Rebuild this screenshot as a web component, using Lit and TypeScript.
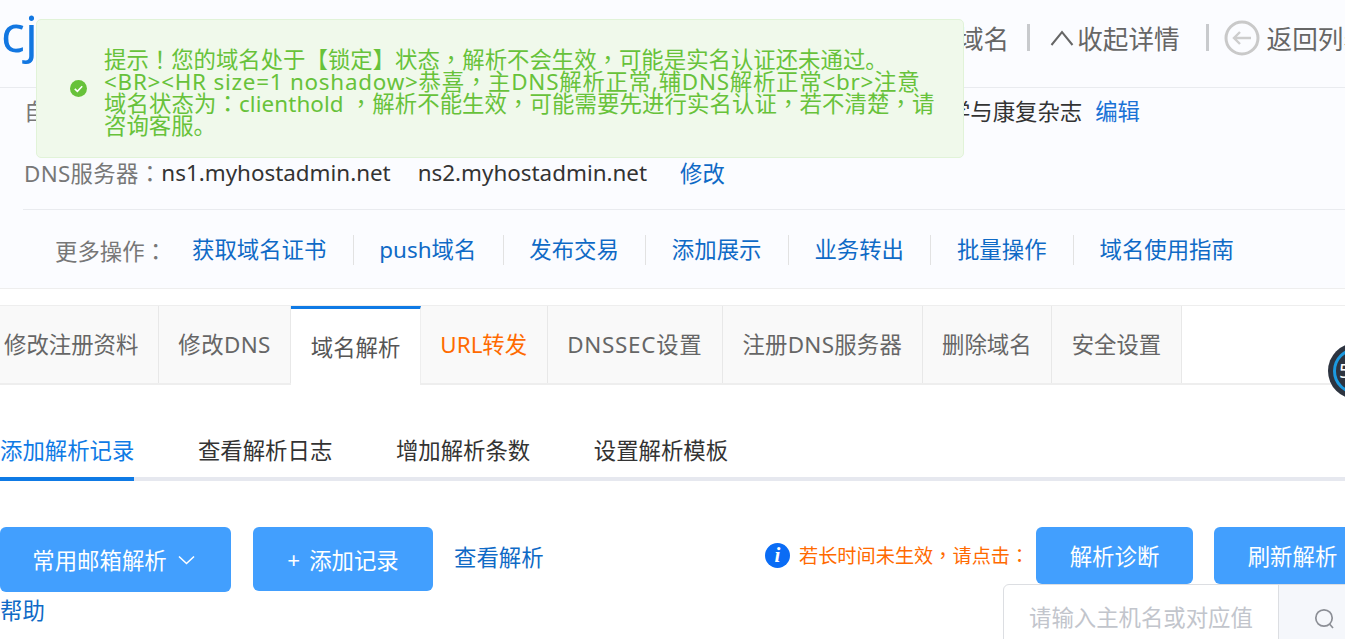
import { LitElement, html, css } from "lit";
import { customElement } from "lit/decorators.js";

const tabs = [
  { t: "修改注册资料", c: "" },
  { t: "修改DNS", c: "ls-a" },
  { t: "域名解析", c: "on" },
  { t: "URL转发", c: "url" },
  { t: "DNSSEC设置", c: "ls-b" },
  { t: "注册DNS服务器", c: "ls-c" },
  { t: "删除域名", c: "" },
  { t: "安全设置", c: "" },
];
const ops = ["获取域名证书", "push域名", "发布交易", "添加展示", "业务转出", "批量操作", "域名使用指南"];
const subs = ["添加解析记录", "查看解析日志", "增加解析条数", "设置解析模板"];
const messageLines = [
  "提示！您的域名处于【锁定】状态，解析不会生效，可能是实名认证还未通过。",
  "<BR><HR size=1 noshadow>恭喜，主DNS解析正常,辅DNS解析正常<br>注意",
  "域名状态为：clienthold ，解析不能生效，可能需要先进行实名认证，若不清楚，请",
  "咨询客服。",
];

/* The reference sets ， ！ ： centred in their cell, which is the TC form of those glyphs. */
const punct = (text: string) =>
  text.split(/([，！：])/).map((part) =>
    /^[，！：]$/.test(part) ? html`<span class="p">${part}</span>` : part
  );

@customElement("app-root")
export class AppRoot extends LitElement {
  static styles = css`
    :host {
      display: block;
      width: 1345px;
      height: 639px;
      overflow: hidden;
      position: relative;
      background: #fff;
      font-family: "Noto Sans", "Noto Sans CJK SC", sans-serif;
      font-size: 22.4px;
      color: #333;
    }
    * { box-sizing: border-box; }
    a { color: #0f6ac6; text-decoration: none; white-space: nowrap; }
    .p { font-family: "Noto Sans CJK TC", sans-serif; line-height: 0; }

    .top { background: #fbfcff; height: 289px; border-bottom: 1px solid #eeeeee; }
    .header { height: 88px; border-bottom: 1px solid #e9ebef; display: flex; align-items: center; overflow: hidden; white-space: nowrap; }
    .logo { font-size: 50px; color: #1277e1; line-height: 1; margin-top: -22px; margin-left: 1px; width: 957px; flex: none; }
    .actions { display: flex; align-items: center; font-size: 25.6px; color: #666; margin-top: -12px; flex: none; }
    .sep { width: 3px; height: 27px; background: #c8cacd; flex: none; }
    .domain { margin-right: 18px; }
    .collapse { display: flex; align-items: center; gap: 3px; margin: 0 26px 0 20px; }
    .back { display: flex; align-items: center; gap: 7px; margin-left: 15px; }

    .info { margin-left: 23px; height: 122px; border-bottom: 1px solid #e9ebef; white-space: nowrap; }
    .row { display: flex; align-items: center; }
    .row1 { height: 44px; justify-content: space-between; padding: 0 205px 0 1px; }
    .row2 { height: 62px; margin-top: 9px; padding-left: 1px; }
    .label { color: #777; }
    .row2 .label { letter-spacing: 0.3px; }
    .ns2 { margin-left: 27px; }
    .edit { margin-left: 33px; }
    .note { display: flex; gap: 13px; align-items: center; }
    .note a { color: #1a72d6; }

    .ops { display: flex; align-items: center; height: 80px; padding-left: 55px; white-space: nowrap; }
    .ops .title { color: #777; width: 137px; flex: none; }
    .ops a { padding-right: 26.5px; margin-right: 25.5px; border-right: 1px solid #e2e2e2; height: 30px; line-height: 30px; }
    .ops a:last-child { border: 0; }

    .tabs { display: flex; margin: 16px 0 0 -15.5px; height: 80px; border-top: 1px solid #eeeeee; border-bottom: 2px solid #eeeeee; }
    .tab { background: #f9f9f9; border-right: 1px solid #e8e8e8; color: #666; padding: 0 19.5px; line-height: 77px; white-space: nowrap; flex: none; }
    .tab.ls-a { letter-spacing: 0.4px; }
    .tab.ls-b { letter-spacing: 0.75px; }
    .tab.ls-c { letter-spacing: 0.25px; }
    .tab.on { background: #fff; color: #555; line-height: 78px; height: 79px; border-top: 3px solid #0f7ae5; border-right-color: #eee; }
    .tab.url { color: #ff6a00; }

    .subtabs { display: flex; align-items: flex-start; gap: 63.6px; margin-top: 36px; height: 60px; border-bottom: 4px solid #e6e8ef; white-space: nowrap; }
    .subtabs span { height: 60px; line-height: 60px; flex: none; }
    .subtabs .on { color: #0f7ae5; border-bottom: 4px solid #0f7ae5; }

    .toolbar { display: flex; margin-top: 46px; white-space: nowrap; }
    .left { width: 765px; flex: none; }
    .left-row { display: flex; align-items: flex-start; height: 65px; }
    .btn { background: #429ffe; color: #fff; border-radius: 6px; display: flex; align-items: center; justify-content: center; flex: none; }
    .mail { width: 231px; height: 65px; gap: 11px; margin-right: 22px; padding-right: 4px; }
    .add { width: 180px; height: 64px; gap: 9px; margin-right: 21px; }
    .view { margin-top: 13px; line-height: 36px; }
    .help { display: block; line-height: 36px; margin-top: 1px; }
    .right-row { display: flex; height: 57px; }
    .tip { display: flex; align-items: center; gap: 9px; color: #ff6a00; font-size: 19.2px; height: 56px; width: 271px; flex: none; }
    .i { width: 25px; height: 25px; border-radius: 50%; background: #0a6cf5; color: #fff; font: italic bold 21px/25px "Liberation Serif", serif; text-align: center; flex: none; }
    .r-btn { width: 157px; height: 57px; margin-right: 21px; }
    .search { display: flex; margin-left: 238px; width: 400px; height: 70px; border: 1px solid #dcdee2; border-radius: 6px 0 0 0; }
    .ph { color: #c2c5cc; width: 275px; padding-left: 25px; line-height: 66px; border-right: 1px solid #dcdee2; flex: none; }
    .s-ic { background: #f5f7fb; flex: 1; padding: 21px 0 0 35px; }

    .toast {
      position: absolute; left: 36px; top: 19px; width: 928px; height: 139px;
      background: #f0f9eb; border: 1px solid #e1f3d8; border-radius: 5px;
      display: flex; align-items: center; color: #67c23a;
    }
    .toast svg { margin-left: 33px; flex: none; }
    .msg { margin-left: 17px; margin-top: 8px; white-space: nowrap; }
    .msg div { height: 22px; line-height: 22px; }
    .msg div:nth-child(2) { letter-spacing: 0.77px; }
    .msg div:nth-child(3) { letter-spacing: 0.1px; }

    .dial { position: absolute; left: 1328px; top: 343px; width: 56px; height: 56px; border-radius: 50%; background: #2d3440; padding: 5px; }
    .dial i { display: block; width: 100%; height: 100%; border-radius: 50%; border: 3px solid #1c9ae0; color: #fff; font-style: normal; font-size: 20px; line-height: 40px; padding-left: 3px; }
  `;

  render() {
    return html`
      <div class="top">
        <div class="header">
          <div class="logo">cj</div>
          <div class="actions">
            <span class="domain">域名</span>
            <span class="sep"></span>
            <span class="collapse">
              <svg width="24" height="18" viewBox="0 0 24 18" fill="none" stroke="#666" stroke-width="2"><path d="M1.5 16L12 3l10.5 13" /></svg>
              收起详情
            </span>
            <span class="sep"></span>
            <span class="back">
              <svg width="36" height="36" viewBox="0 0 36 36" fill="none"><circle cx="18" cy="18" r="16" stroke="#c9c9c9" stroke-width="3" /><path d="M27 18H10M16 12l-6 6 6 6" stroke="#cdcdcd" stroke-width="2.4" /></svg>
              返回列表
            </span>
          </div>
        </div>
        <div class="info">
          <div class="row row1">
            <span class="label">自动</span>
            <span class="note"><span>学与康复杂志</span><a>编辑</a></span>
          </div>
          <div class="row row2">
            <span class="label">DNS服务器${punct("：")}</span><span>ns1.myhostadmin.net</span>
            <span class="ns2">ns2.myhostadmin.net</span>
            <a class="edit">修改</a>
          </div>
        </div>
        <div class="ops">
          <span class="title">更多操作${punct("：")}</span>
          ${ops.map((o) => html`<a>${o}</a>`)}
        </div>
      </div>

      <div class="tabs">
        ${tabs.map((x) => html`<div class="tab ${x.c}">${x.t}</div>`)}
      </div>

      <div class="subtabs">
        ${subs.map((s, i) => html`<span class=${i === 0 ? "on" : ""}>${s}</span>`)}
      </div>

      <div class="toolbar">
        <div class="left">
          <div class="left-row">
            <div class="btn mail">
              常用邮箱解析
              <svg width="17" height="10" viewBox="0 0 17 10" fill="none" stroke="#fff" stroke-width="1.6"><path d="M1 1.5l7.5 7 7.5-7" /></svg>
            </div>
            <div class="btn add"><span>+</span><span>添加记录</span></div>
            <a class="view">查看解析</a>
          </div>
          <a class="help">帮助</a>
        </div>
        <div class="right">
          <div class="right-row">
            <div class="tip"><span class="i">i</span><span>${punct("若长时间未生效，请点击：")}</span></div>
            <div class="btn r-btn">解析诊断</div>
            <div class="btn r-btn">刷新解析</div>
          </div>
          <div class="search">
            <div class="ph">请输入主机名或对应值</div>
            <div class="s-ic">
              <svg width="22" height="22" viewBox="0 0 22 22" fill="none" stroke="#8c8f96" stroke-width="1.7"><circle cx="10" cy="10" r="8.2" /><path d="M15.5 16l3.5 4" /></svg>
            </div>
          </div>
        </div>
      </div>

      <div class="toast">
        <svg width="17" height="17" viewBox="0 0 17 17"><circle cx="8.5" cy="8.5" r="8.5" fill="#67c23a" /><path d="M4.8 8.8l2.6 2.5 4.8-5" fill="none" stroke="#fff" stroke-width="1.6" /></svg>
        <div class="msg">${messageLines.map((l) => html`<div>${punct(l)}</div>`)}</div>
      </div>
      <div class="dial"><i>5</i></div>
    `;
  }
}
